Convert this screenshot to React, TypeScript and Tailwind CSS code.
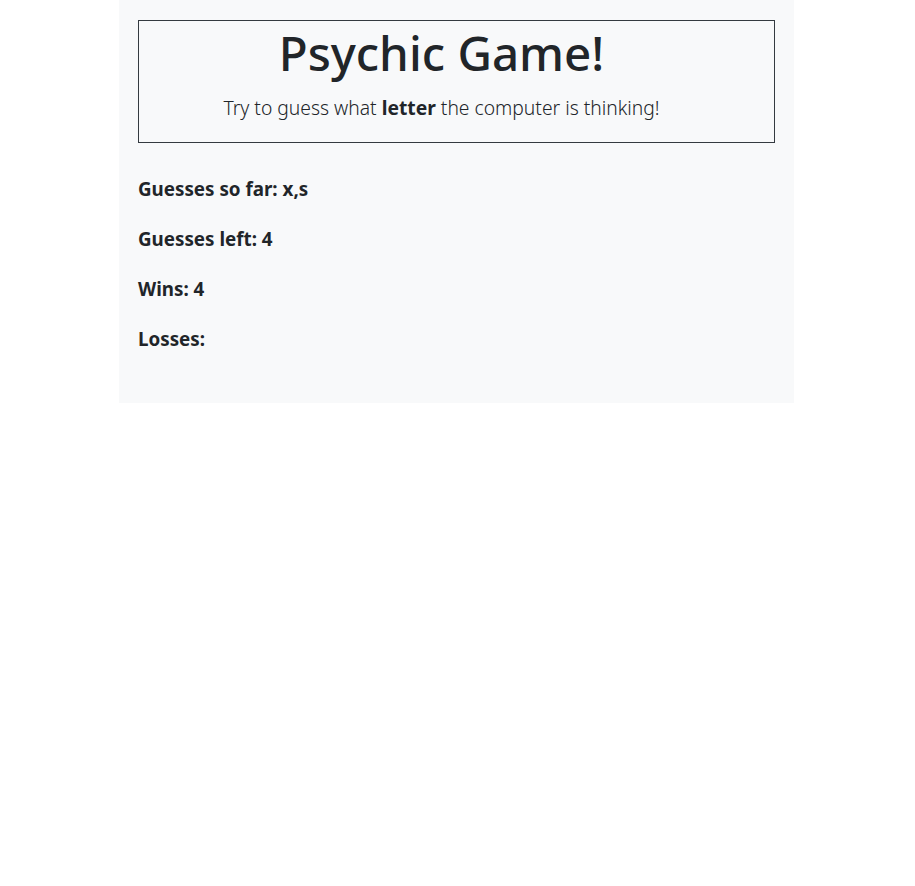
export default function App() {
  const stats = [
    { label: "Guesses so far:", value: "x,s" },
    { label: "Guesses left:", value: "4" },
    { label: "Wins:", value: "4" },
    { label: "Losses:", value: "" },
  ];

  return (
    <div className="min-h-screen bg-white text-[#212529]" style={{ fontFamily: '"Noto Sans", "Open Sans", sans-serif' }}>
      <div className="ml-[119px] w-[675px] bg-[#f8f9fa] px-[19px] pt-[20px] pb-[52px]">
        {/* Header */}
        <div className="h-[123px] border border-[#343a40] pt-[3px] pr-[30px] text-center">
          <h1 className="text-[47.5px] font-medium leading-[58px]">Psychic Game!</h1>
          <p className="mt-[11px] text-[19.3px] leading-[30px] font-light">
            Try to guess what <b className="font-bold">letter</b> the computer is thinking!
          </p>
        </div>

        {/* Stats */}
        <div className="mt-[34px] flex flex-col gap-[26px]">
          {stats.map((s) => (
            <h5 key={s.label} className="text-[18.8px] font-bold leading-[24px]">
              {s.label} {s.value}
            </h5>
          ))}
        </div>
      </div>
    </div>
  );
}
